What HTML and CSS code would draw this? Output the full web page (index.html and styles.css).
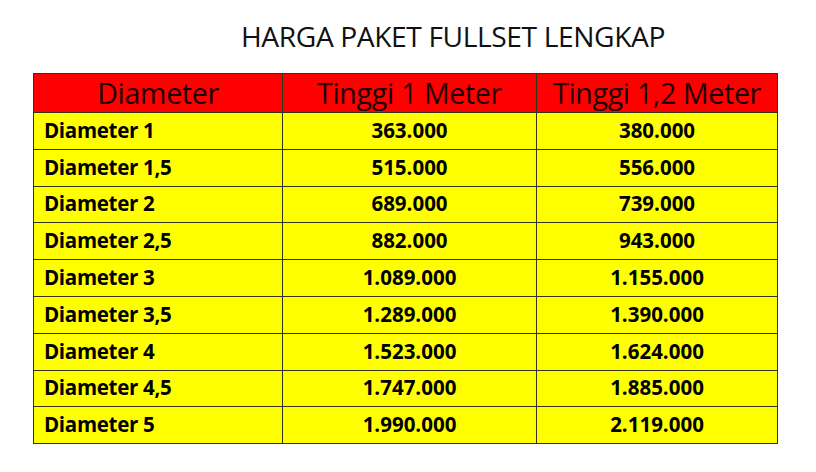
FILE: index.html
```html
<!DOCTYPE html>
<html>
<head>
<meta charset="utf-8">
<link rel="stylesheet" href="styles.css">
</head>
<body>
<div class="page">
  <h1 class="title">HARGA PAKET FULLSET LENGKAP</h1>
  <table class="price">
    <colgroup><col class="c1"><col class="c2"><col class="c3"></colgroup>
    <thead>
      <tr><th>Diameter</th><th>Tinggi 1 Meter</th><th>Tinggi 1,2 Meter</th></tr>
    </thead>
    <tbody>
      <tr><td class="name">Diameter 1</td><td>363.000</td><td>380.000</td></tr>
      <tr><td class="name">Diameter 1,5</td><td>515.000</td><td>556.000</td></tr>
      <tr><td class="name">Diameter 2</td><td>689.000</td><td>739.000</td></tr>
      <tr><td class="name">Diameter 2,5</td><td>882.000</td><td>943.000</td></tr>
      <tr><td class="name">Diameter 3</td><td>1.089.000</td><td>1.155.000</td></tr>
      <tr><td class="name">Diameter 3,5</td><td>1.289.000</td><td>1.390.000</td></tr>
      <tr><td class="name">Diameter 4</td><td>1.523.000</td><td>1.624.000</td></tr>
      <tr><td class="name">Diameter 4,5</td><td>1.747.000</td><td>1.885.000</td></tr>
      <tr><td class="name">Diameter 5</td><td>1.990.000</td><td>2.119.000</td></tr>
    </tbody>
  </table>
</div>
</body>
</html>
```
FILE: styles.css
```css
html, body {
  margin: 0;
  padding: 0;
  background: #ffffff;
}
.page {
  width: 816px;
  height: 472px;
  padding: 19px 0 0 33px;
  box-sizing: border-box;
  font-family: "Open Sans", "Liberation Sans", sans-serif;
  color: #111;
}
.title {
  margin: 0 0 20px 0;
  width: 743px;
  padding-left: 97px;
  box-sizing: border-box;
  text-align: center;
  font-weight: 400;
  font-size: 28.2px;
  line-height: 34px;
  letter-spacing: -0.4px;
}
.price {
  border-collapse: collapse;
  table-layout: fixed;
  width: 744px;
  border: 1px solid #33331a;
}
.c1 { width: 249px; }
.c2 { width: 254px; }
.c3 { width: 241px; }
.price th {
  background: #ff0000;
  color: #200000;
  font-weight: 400;
  font-size: 28.5px;
  letter-spacing: -0.3px;
  height: 38px;
  padding: 0;
  line-height: 36px;
  border: 1px solid #33331a;
  text-align: center;
}
.price td {
  background: #ffff00;
  color: #000;
  font-weight: 700;
  font-size: 20.5px;
  letter-spacing: 0;
  height: 33.8px;
  line-height: 26px;
  padding: 0 0 2px 0;
  border: 1px solid #33331a;
  text-align: center;
}
.price td.name {
  text-align: left;
  padding-left: 10px;
  letter-spacing: -0.3px;
}
```
